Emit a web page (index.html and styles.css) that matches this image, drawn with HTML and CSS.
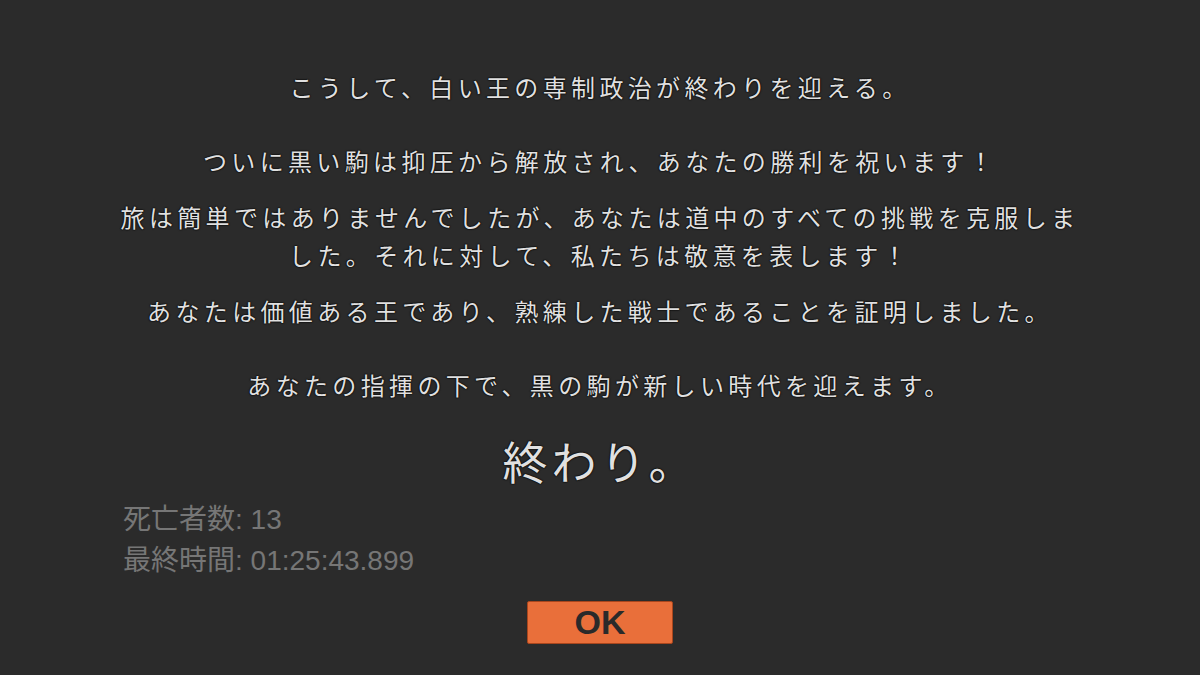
FILE: index.html
```html
<!DOCTYPE html>
<html lang="ja">
<head>
<meta charset="utf-8">
<title>終わり</title>
<link rel="stylesheet" href="styles.css">
</head>
<body>
<main class="ending">
  <section class="story">
    <p class="line">こうして、白い王の専制政治が終わりを迎える。</p>
    <p class="line gap-wide">ついに黒い駒は抑圧から解放され、あなたの勝利を祝います！</p>
    <p class="line">旅は簡単ではありませんでしたが、あなたは道中のすべての挑戦を克服しました。それに対して、私たちは敬意を表します！</p>
    <p class="line">あなたは価値ある王であり、熟練した戦士であることを証明しました。</p>
    <p class="line gap-wide">あなたの指揮の下で、黒の駒が新しい時代を迎えます。</p>
  </section>
  <h1 class="finale">終わり。</h1>
  <section class="stats">
    <div class="stat">死亡者数: 13</div>
    <div class="stat">最終時間: 01:25:43.899</div>
  </section>
  <div class="actions">
    <button class="ok-button" type="button">OK</button>
  </div>
</main>
</body>
</html>
```

FILE: styles.css
```css
html, body {
  margin: 0;
  padding: 0;
  background: #2b2b2b;
  width: 1200px;
  height: 675px;
  overflow: hidden;
}

body {
  font-family: "Noto Sans CJK JP", "Noto Sans", sans-serif;
}

.ending {
  width: 960px;
  margin: 0 auto;
  padding-top: 68px;
  display: flex;
  flex-direction: column;
}

.story {
  display: flex;
  flex-direction: column;
}

.line {
  margin: 18px 0 0;
  font-size: 24px;
  line-height: 38px;
  letter-spacing: 4.35px;
  color: #e0e0e0;
  text-align: center;
  text-shadow: 0 0 2px #000, 0 0 1px #000, 0 0 1px #000;
}

.line:first-child {
  margin-top: 0;
}

.line.gap-wide {
  margin-top: 36px;
}

.finale {
  margin: 29px 0 0;
  font-weight: 400;
  font-size: 45px;
  line-height: 56px;
  letter-spacing: 4px;
  color: #e0e0e0;
  text-align: center;
  text-shadow: 0 0 2px #000, 0 0 1px #000, 0 0 1px #000;
}

.stats {
  margin-top: 10px;
  display: flex;
  flex-direction: column;
}

.stat {
  font-family: "Liberation Sans", "Noto Sans CJK JP", sans-serif;
  font-size: 28px;
  line-height: 41px;
  color: #767676;
  padding-left: 3px;
}

.actions {
  margin-top: 20px;
  display: flex;
  justify-content: center;
}

.ok-button {
  width: 146px;
  height: 43px;
  padding: 0;
  background: #e96f3a;
  border: 1px solid #a9461d;
  border-radius: 2px;
  font-family: "Liberation Sans", sans-serif;
  font-weight: 700;
  font-size: 34px;
  line-height: 41px;
  color: #2a2a2a;
  cursor: pointer;
}
```
